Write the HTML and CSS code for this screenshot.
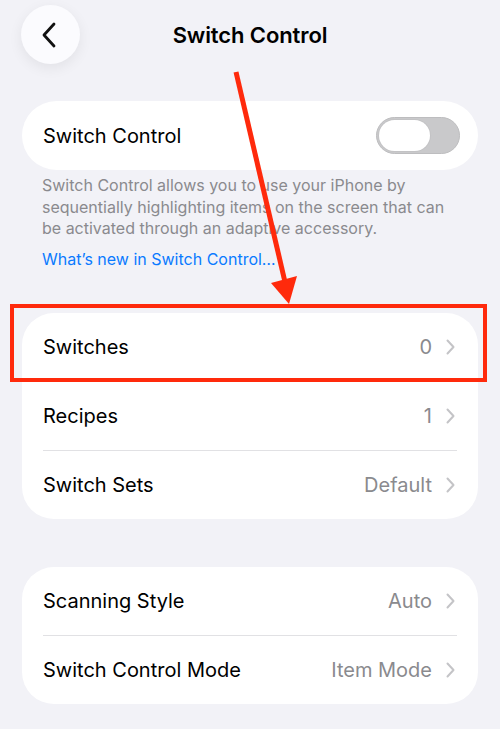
FILE: index.html
```html
<!DOCTYPE html>
<html lang="en">
<head>
<meta charset="utf-8">
<title>Switch Control</title>
<link rel="stylesheet" href="styles.css">
</head>
<body>
<div class="screen">
  <header class="nav">
    <button class="back" aria-label="Back">
      <svg viewBox="0 0 20 28" width="20" height="28"><path d="M15 3 L5 14 L15 25" fill="none" stroke="#111" stroke-width="2.8" stroke-linecap="round" stroke-linejoin="round"/></svg>
    </button>
    <h1 class="title">Switch Control</h1>
    <span></span>
  </header>

  <section class="card card-single">
    <div class="row">
      <span class="label">Switch Control</span>
      <span class="toggle"><span class="knob"></span></span>
    </div>
  </section>
  <p class="note">Switch Control allows you to use your iPhone by sequentially highlighting items on the screen that can be activated through an adaptive accessory.</p>
  <a class="link" href="#">What’s new in Switch Control…</a>

  <section class="card group-a">
    <div class="row"><span class="label">Switches</span><span class="value">0</span><span class="chev"></span></div>
    <div class="sep"></div>
    <div class="row"><span class="label">Recipes</span><span class="value">1</span><span class="chev"></span></div>
    <div class="sep"></div>
    <div class="row"><span class="label">Switch Sets</span><span class="value">Default</span><span class="chev"></span></div>
  </section>

  <section class="card group-b">
    <div class="row"><span class="label">Scanning Style</span><span class="value">Auto</span><span class="chev"></span></div>
    <div class="sep"></div>
    <div class="row"><span class="label">Switch Control Mode</span><span class="value">Item Mode</span><span class="chev"></span></div>
  </section>

  <svg class="markup" viewBox="0 0 500 729" width="500" height="729">
    <line x1="236" y1="72" x2="285" y2="282" stroke="#ff2a0c" stroke-width="5"/>
    <polygon points="271,283 297,276 289,304" fill="#ff2a0c"/>
    <rect x="12" y="306" width="473" height="74" fill="none" stroke="#ff2a0c" stroke-width="4"/>
  </svg>
</div>
</body>
</html>
```

FILE: styles.css
```css
* { box-sizing: border-box; }

html, body {
  margin: 0;
  background: #f2f2f7;
}

body {
  font-family: Inter, "Noto Sans", "Liberation Sans", sans-serif;
  color: #000;
  -webkit-font-smoothing: antialiased;
}

.screen {
  position: relative;
  width: 500px;
  height: 729px;
  overflow: hidden;
}

.nav {
  display: grid;
  grid-template-columns: 1fr auto 1fr;
  align-items: center;
  height: 59px;
  margin-top: 5px;
  padding: 0 21px;
}

.back {
  width: 59px;
  height: 59px;
  border: 0;
  border-radius: 50%;
  background: #fbfbfe;
  box-shadow: 0 4px 14px rgba(0, 0, 0, 0.07);
  display: flex;
  align-items: center;
  justify-content: center;
  padding: 0 3px 0 0;
}

.title {
  margin: 1px 0 0;
  font-size: 22px;
  font-weight: 600;
  letter-spacing: -0.1px;
}

.card {
  margin: 0 22px;
  background: #fff;
  border-radius: 32px;
  overflow: hidden;
}

.card-single {
  margin-top: 37px;
  border-radius: 35px;
}

.card-single .row {
  height: 69px;
  padding-right: 18px;
}

.row {
  display: flex;
  align-items: center;
  height: 68px;
  padding: 0 23px 0 21px;
  font-size: 20px;
}

.label {
  flex: 1;
}

.value {
  color: #8a8a8e;
}

.chev {
  width: 9px;
  height: 16px;
  margin-left: 14px;
  background: no-repeat center / 9px 16px
    url("data:image/svg+xml;utf8,<svg xmlns='http://www.w3.org/2000/svg' viewBox='0 0 9 16'><path d='M1.5 1.5 L7.5 8 L1.5 14.5' fill='none' stroke='%23c4c4c7' stroke-width='2' stroke-linecap='round' stroke-linejoin='round'/></svg>");
}

.sep {
  height: 1px;
  margin: 0 21px;
  background: #e1e1e4;
}

.toggle {
  position: relative;
  width: 84px;
  height: 37px;
  border-radius: 19px;
  background: #c9c9cb;
  border: 1px solid #bdbdbf;
}

.knob {
  position: absolute;
  left: 2px;
  top: 2px;
  width: 51px;
  height: 31px;
  border-radius: 16px;
  background: #fff;
  box-shadow: 0 0 0 1px #c3c3c5;
}

.note {
  margin: 5px 0 0;
  padding: 0 42px;
  font-size: 16px;
  line-height: 21.5px;
  color: #8a8a8e;
}

.link {
  display: block;
  margin: 8px 0 0 42px;
  font-size: 16px;
  line-height: 22px;
  color: #0a7aff;
  text-decoration: none;
}

.group-a {
  margin-top: 43px;
}

.group-b {
  margin-top: 48px;
}

.markup {
  position: absolute;
  left: 0;
  top: 0;
  pointer-events: none;
}
```
